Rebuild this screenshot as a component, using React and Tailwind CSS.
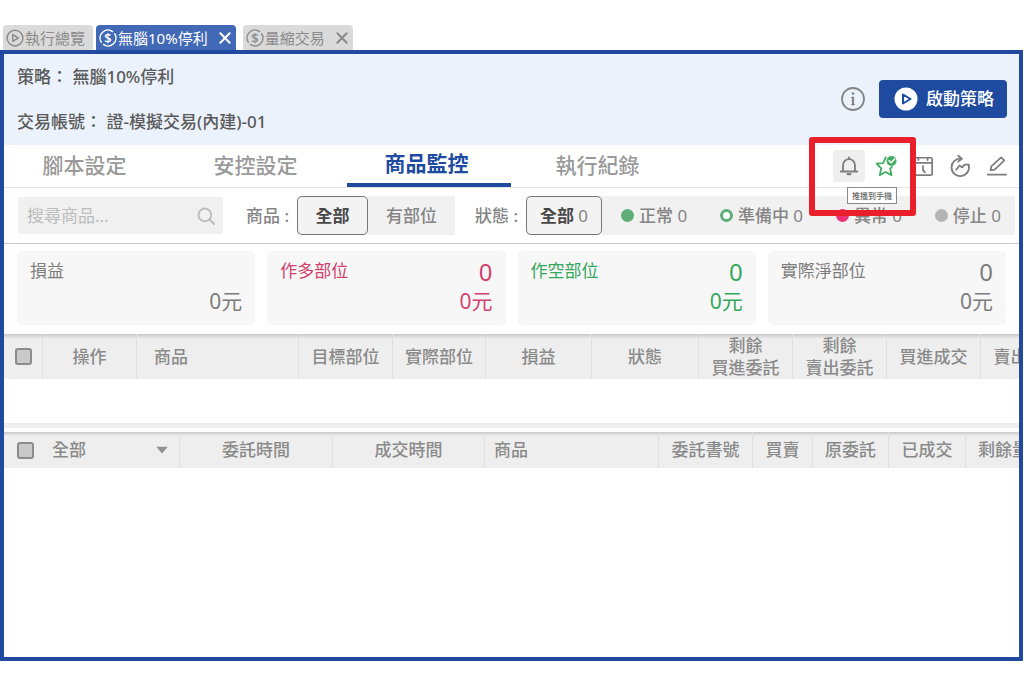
import React, { useState } from "react";

const OPEN_TABS = [
  { id: "overview", label: "執行總覽", icon: "play", closable: false },
  { id: "stop10", label: "無腦10%停利", icon: "dollar", closable: true },
  { id: "volume", label: "量縮交易", icon: "dollar", closable: true },
];

const SECTIONS = ["腳本設定", "安控設定", "商品監控", "執行紀錄"];

const STATUSES = [
  { label: "正常", count: 0, dot: "bg-[#5fae78]" },
  { label: "準備中", count: 0, dot: "border-3 border-[#5fae78] bg-white" },
  { label: "異常", count: 0, dot: "bg-[#ee3078]" },
  { label: "停止", count: 0, dot: "bg-[#b3b3b3]" },
];

const SUMMARY = [
  { title: "損益", amount: "0元", color: "text-[#7c7c7c]" },
  { title: "作多部位", count: 0, amount: "0元", color: "text-[#d2416e]" },
  { title: "作空部位", count: 0, amount: "0元", color: "text-[#35a75c]" },
  { title: "實際淨部位", count: 0, amount: "0元", color: "text-[#7c7c7c]" },
];

const POSITION_COLUMNS = [
  { lines: ["操作"], width: "w-[94px]" },
  { lines: ["商品"], width: "w-[162px]", left: true },
  { lines: ["目標部位"], width: "w-[94px]" },
  { lines: ["實際部位"], width: "w-[93px]" },
  { lines: ["損益"], width: "w-[106px]" },
  { lines: ["狀態"], width: "w-[107px]" },
  { lines: ["剩餘", "買進委託"], width: "w-[94px]" },
  { lines: ["剩餘", "賣出委託"], width: "w-[94px]" },
  { lines: ["買進成交"], width: "w-[94px]" },
  { lines: ["賣出成交"], width: "w-[94px]" },
];

const ORDER_COLUMNS = [
  { lines: ["委託時間"], width: "w-[153px]" },
  { lines: ["成交時間"], width: "w-[152px]" },
  { lines: ["商品"], width: "w-[174px]", left: true },
  { lines: ["委託書號"], width: "w-[94px]" },
  { lines: ["買賣"], width: "w-[60px]" },
  { lines: ["原委託"], width: "w-[76px]" },
  { lines: ["已成交"], width: "w-[77px]" },
  { lines: ["剩餘量"], width: "w-[76px]" },
];

const Svg = ({ className, children, strokeWidth = 2 }) => (
  <svg
    viewBox="0 0 24 24"
    className={className}
    fill="none"
    stroke="currentColor"
    strokeWidth={strokeWidth}
    strokeLinecap="round"
    strokeLinejoin="round"
    aria-hidden="true"
  >
    {children}
  </svg>
);

const PlayCircleIcon = () => (
  <Svg className="size-[18px] shrink-0">
    <circle cx="12" cy="12" r="10.5" />
    <path d="M9 7.5v9l7.5-4.5z" />
  </Svg>
);

const DollarIcon = () => (
  <Svg className="size-[18px] shrink-0">
    <path d="M3 17.5A10.5 10.5 0 0 1 18 3.4M21 6.5A10.5 10.5 0 0 1 6 20.6" />
    <text
      x="12"
      y="18"
      textAnchor="middle"
      fontSize="17"
      fontWeight="600"
      fill="currentColor"
      stroke="none"
    >
      $
    </text>
  </Svg>
);

const CloseIcon = () => (
  <Svg className="size-3.5" strokeWidth={3.5}>
    <path d="M4 4l16 16M20 4L4 20" />
  </Svg>
);

const InfoIcon = () => (
  <Svg className="size-6" strokeWidth={1.8}>
    <circle cx="12" cy="12" r="11" />
    <path d="M12 10.5v7" strokeWidth="2.2" />
    <path d="M10.5 10.5H12M10.5 17.5h3" strokeWidth="1.2" />
    <circle cx="12" cy="6.5" r="1.3" fill="currentColor" stroke="none" />
  </Svg>
);

const StartIcon = () => (
  <svg viewBox="0 0 24 24" className="size-6" aria-hidden="true">
    <circle cx="12" cy="12" r="11.5" fill="#fff" />
    <path
      d="M9 7.5v9l7.5-4.5z"
      fill="none"
      stroke="#1e4aa0"
      strokeWidth="2"
      strokeLinejoin="round"
    />
  </svg>
);

const BellIcon = () => (
  <Svg className="size-[22px]" strokeWidth={2}>
    <path d="M3 18h18M5.5 18v-7a6.5 6.5 0 0 1 13 0v7M12 4V2.5" />
    <path d="M10.5 20.8h3" strokeWidth="2.5" />
  </Svg>
);

const StarCheckIcon = () => (
  <Svg className="size-[22px]" strokeWidth={2}>
    <path d="M11.8 2.5L8.8 8.800 1.800 9.500l5 5L5.200 22l6.300-3.500L18 22l-1.500-7 2-2" />
    <circle cx="18" cy="6.5" r="5.5" fill="currentColor" stroke="none" />
    <path d="M15.3 6.3l2.2 2.2 4-4.2" stroke="#fff" strokeWidth="1.6" />
  </Svg>
);

const CalendarClockIcon = () => (
  <Svg className="size-[22px]" strokeWidth={1.9}>
    <rect x="2" y="3" width="20" height="19" rx="1.5" />
    <path d="M2 8.5h20M7 3v2.500M17 3v2.500M12 12v4.500l2 2.500" />
  </Svg>
);

const RerunIcon = () => (
  <Svg className="size-[22px]" strokeWidth={2}>
    <path d="M13 4A9.500 9.500 0 1 0 21.300 10.500" />
    <path d="M10 .8l4 3.200-4 3.200" />
    <path d="M8 16l3.500-4.500 3 2L17 10.500h4.300" />
  </Svg>
);

const PenIcon = () => (
  <Svg className="size-[22px]" strokeWidth={1.9}>
    <path d="M2 21.5h20" />
    <path d="M5 16.5l.8-4L16.500 2.500l3.500 3.300L9.500 16z" />
  </Svg>
);

const SearchIcon = () => (
  <Svg className="size-[18px]" strokeWidth={2.5}>
    <circle cx="10.5" cy="10.5" r="8.5" />
    <path d="M17 17l6 6" />
  </Svg>
);

const TabStrip = ({ active, setActive }) => (
  <div className="flex h-[25px] pl-[3px]">
    {OPEN_TABS.map((tab) => (
      <div
        key={tab.id}
        className={`flex items-center rounded-t-[4px] pl-[3px] text-[15px] leading-6 ${
          tab.closable ? "mr-[7px] pr-1" : "mr-[3px] pr-2"
        } ${
          tab.id === active
            ? "bg-[#4169b5] text-white"
            : "bg-[#dadada] text-[#8b8b8b]"
        }`}
      >
        <button
          type="button"
          className="flex items-center gap-px"
          onClick={() => setActive(tab.id)}
        >
          {tab.icon === "play" ? <PlayCircleIcon /> : <DollarIcon />}
          {tab.label}
        </button>
        {tab.closable && (
          <button type="button" aria-label="關閉" className="ml-[10px]">
            <CloseIcon />
          </button>
        )}
      </div>
    ))}
  </div>
);

const StrategyHeader = () => (
  <header className="flex items-center justify-between bg-[#ebf2fb] pb-px pr-3 pl-[13px] text-[17px] font-medium text-[#5a5a5a]">
    <div className="leading-[45px]">
      <p>策略： 無腦10%停利</p>
      <p>交易帳號： 證-模擬交易(內建)-01</p>
    </div>
    <div className="flex items-center gap-[14px]">
      <button type="button" aria-label="說明" className="text-[#858585]">
        <InfoIcon />
      </button>
      <button
        type="button"
        className="flex h-[38px] items-center gap-2 rounded-[4px] bg-[#1e4aa0] pr-[13px] pl-[15px] text-white"
      >
        <StartIcon />
        啟動策略
      </button>
    </div>
  </header>
);

const ToolButton = ({ label, className = "", children }) => (
  <button
    type="button"
    aria-label={label}
    className={`flex size-8 items-center justify-center rounded-[3px] ${className}`}
  >
    {children}
  </button>
);

const Toolbar = () => (
  <div className="relative flex items-center gap-[5px] pr-[6px] text-[#7d7d7d]">
    <ToolButton label="推播到手機" className="bg-[#efefef]">
      <BellIcon />
    </ToolButton>
    <ToolButton label="收藏" className="text-[#43ad64]">
      <StarCheckIcon />
    </ToolButton>
    <ToolButton label="排程">
      <CalendarClockIcon />
    </ToolButton>
    <ToolButton label="重新執行">
      <RerunIcon />
    </ToolButton>
    <ToolButton label="編輯">
      <PenIcon />
    </ToolButton>
    {/* highlighted area and tooltip float above the filter bar */}
    <div className="pointer-events-none absolute -top-2 -left-6 z-10 h-[79px] w-[107px] rounded-[3px] border-6 border-[#e9202b]" />
    <div
      role="tooltip"
      className="absolute top-[42px] left-[14px] z-20 border border-[#8a8a8a] bg-white px-1 text-[8px] leading-[15px] font-medium whitespace-nowrap text-[#666]"
    >
      推播到手機
    </div>
  </div>
);

const SectionNav = ({ section, setSection }) => (
  <nav className="flex h-[43px] justify-between border-b border-[#e4e4e4]">
    <div className="flex gap-[7px] pl-px">
      {SECTIONS.map((name) => (
        <button
          key={name}
          type="button"
          onClick={() => setSection(name)}
          className={`w-[164px] border-b-4 pr-[5px] text-[21px] leading-8 ${
            name === section
              ? "border-[#1e4aa0] pb-0.5 font-bold text-[#1e4aa0]"
              : "border-transparent pt-0.5 font-medium text-[#9a9a9a]"
          }`}
        >
          {name}
        </button>
      ))}
    </div>
    <Toolbar />
  </nav>
);

const FilterBar = () => {
  const [query, setQuery] = useState("");

  return (
    <div className="flex h-[56px] items-center border-b border-[#c9c9c9] pr-1 pl-[14px] text-[17px] text-[#858585]">
      <label className="flex h-[37px] w-[205px] items-center justify-between rounded-[3px] bg-[#f0f0f0] pr-2 pl-[9px] text-[#bcbcbc]">
        <input
          type="text"
          aria-label="搜尋商品"
          value={query}
          onChange={(e) => setQuery(e.target.value)}
          placeholder="搜尋商品..."
          className="w-[150px] placeholder:text-[#bcbcbc] focus:outline-none"
        />
        <SearchIcon />
      </label>

      <span className="ml-[23px] w-[51px] font-medium whitespace-nowrap">
        商品 :
      </span>
      <div className="flex h-[39px] items-center bg-[#f1f1f1] pr-[18px]">
        <button
          type="button"
          className="h-[39px] w-[71px] rounded-[5px] border border-[#777] bg-[#f3f3f3] font-bold text-[#484848]"
        >
          全部
        </button>
        <button type="button" className="ml-[18px] font-medium">
          有部位
        </button>
      </div>

      <span className="ml-[20px] w-[51px] font-medium whitespace-nowrap">
        狀態 :
      </span>
      <div className="flex h-[39px] flex-1 items-center bg-[#f1f1f1]">
        <button
          type="button"
          className="h-[39px] w-[76px] rounded-[5px] border border-[#777] bg-[#f3f3f3] font-bold text-[#484848]"
        >
          全部 <span className="font-normal text-[#858585]">0</span>
        </button>
        <div className="flex flex-1 justify-between pr-[14px] pl-[19px]">
          {STATUSES.map((status) => (
            <button
              key={status.label}
              type="button"
              className="flex items-center gap-[5px] font-medium whitespace-nowrap"
            >
              <span className={`size-[13px] rounded-full ${status.dot}`} />
              <span>
                {status.label} <span className="font-normal">{status.count}</span>
              </span>
            </button>
          ))}
        </div>
      </div>
    </div>
  );
};

const SummaryCards = () => (
  <div className="grid grid-cols-4 gap-3 px-[13px] pt-[7px] pb-[9px]">
    {SUMMARY.map((card) => (
      <div
        key={card.title}
        className={`flex h-[74px] justify-between rounded-[5px] bg-[#f7f7f7] px-[13px] ${card.color}`}
      >
        <h3 className="pt-[7px] text-[17px] leading-[26px]">{card.title}</h3>
        <div className="flex flex-col justify-end pb-[9px] text-right">
          {card.count !== undefined && (
            <span className="text-2xl leading-7">{card.count}</span>
          )}
          <span className="text-[21px] leading-[30px]">{card.amount}</span>
        </div>
      </div>
    ))}
  </div>
);

const CheckBox = ({ label }) => (
  <input
    type="checkbox"
    aria-label={label}
    className="block size-[17px] shrink-0 appearance-none rounded-[3px] border-2 border-[#8c8c8c] bg-[#c9c9c9] checked:bg-[#1e4aa0]"
  />
);

const HeadCells = ({ columns, leftPad }) =>
  columns.map((column) => (
    <th
      key={column.lines.join("")}
      scope="col"
      className={`border-l border-[#dfdfdf] p-0 font-medium whitespace-nowrap ${column.width} ${
        column.left ? `text-left ${leftPad}` : "text-center"
      }`}
    >
      {column.lines.map((line) => (
        <span key={line} className="block leading-[22px]">
          {line}
        </span>
      ))}
    </th>
  ));

const PositionTable = () => (
  <div className="h-[89px] overflow-hidden">
    <table className="w-[1070px] table-fixed border-separate border-spacing-0 text-[17px] text-[#8a8a8a]">
      <thead className="bg-[#eee]">
        <tr className="h-[45px] bg-linear-to-b from-[#c9c9c9] to-[#eee] to-[5px]">
          <th scope="col" className="w-[38px] p-0 pl-[11px]">
            <CheckBox label="全選商品" />
          </th>
          <HeadCells columns={POSITION_COLUMNS} leftPad="pl-[17px]" />
        </tr>
      </thead>
    </table>
  </div>
);

const OrderTable = () => (
  <div className="flex-1 overflow-hidden">
    <table className="w-[1037px] table-fixed border-separate border-spacing-0 text-[17px] text-[#8a8a8a]">
      <thead className="bg-[#eee]">
        <tr className="h-[36px] bg-linear-to-b from-[#c9c9c9] to-[#eee] to-[4px]">
          <th scope="col" className="w-[175px] p-0 pl-[13px] font-medium">
            <div className="flex items-center gap-[18px]">
              <CheckBox label="全選委託" />
              <div className="relative flex-1">
                <select
                  aria-label="委託狀態"
                  className="w-full appearance-none leading-[22px] focus:outline-none"
                >
                  <option>全部</option>
                </select>
                <svg
                  viewBox="0 0 12 7"
                  className="pointer-events-none absolute top-1/2 right-[11px] h-[7px] w-3 -translate-y-1/2"
                  aria-hidden="true"
                >
                  <path d="M0 0h12L6 7z" fill="#929292" />
                </svg>
              </div>
            </div>
          </th>
          <HeadCells columns={ORDER_COLUMNS} leftPad="pl-[9px]" />
        </tr>
      </thead>
    </table>
  </div>
);

const App = () => {
  const [activeTab, setActiveTab] = useState("stop10");
  const [section, setSection] = useState("商品監控");

  return (
    <div className="flex min-h-screen flex-col overflow-hidden bg-white pt-[25px] pr-px pb-[22px] font-['Noto_Sans','Noto_Sans_CJK_TC',sans-serif]">
      <TabStrip active={activeTab} setActive={setActiveTab} />
      <main className="flex min-w-0 flex-1 flex-col border-4 border-[#2149a0]">
        <StrategyHeader />
        <SectionNav section={section} setSection={setSection} />
        <FilterBar />
        <SummaryCards />
        <PositionTable />
        <div className="mb-1 h-[5px] bg-[#efefef]" />
        <OrderTable />
      </main>
    </div>
  );
};

export default App;
